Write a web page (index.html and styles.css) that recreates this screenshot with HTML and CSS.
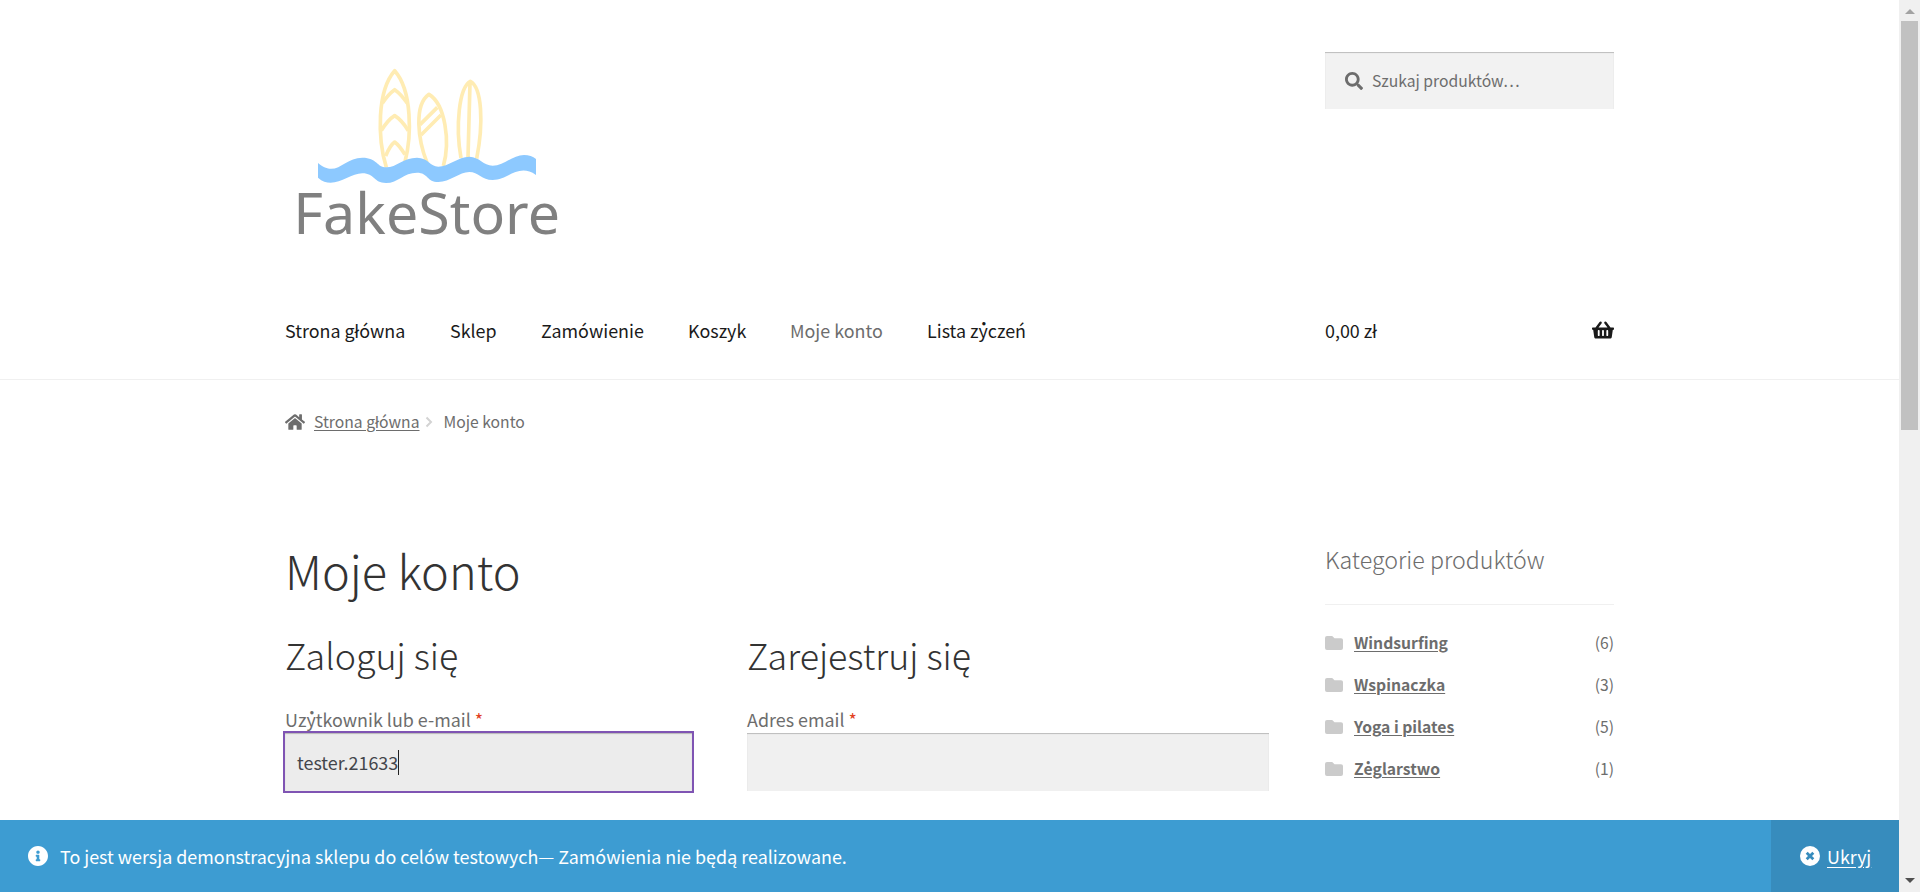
FILE: index.html
```html
<!DOCTYPE html>
<html lang="pl">
<head>
<meta charset="utf-8">
<title>Moje konto – FakeStore</title>
<link rel="stylesheet" href="styles.css">
</head>
<body>
<div class="window">
  <div class="page">
    <header class="header">
      <div class="wrap">
        <div class="branding">
          <svg class="logo" viewBox="0 0 900 600">
            <g fill="none" stroke="#ffecb3" stroke-width="11" stroke-linejoin="round">
              <path d="M319 352C292 265 291 122 344 62C397 122 395 258 375 335"/>
              <path d="M307 160Q325 132 344 119Q363 132 382 160M304 242Q323 210 344 197Q365 210 385 242M317 318Q330 286 344 276Q358 286 375 314"/>
              <path d="M441 338C414 270 401 165 447 133C496 163 511 275 490 348"/>
              <path d="M420 224L472 172M423 255L483 195"/>
              <path d="M543 324C526 230 537 112 571 94C606 112 611 220 590 326M570 98L564 322"/>
            </g>
            <path fill="#8dc9ff" d="M114 339C170 386 190 323 247 323C292 323 290 352 319 352C350 352 370 323 411 323C445 323 450 350 475 350C505 350 535 320 568 320C598 320 610 347 638 347C670 347 700 315 732 315Q754 315 768 327V375C715 338 685 390 638 390C605 390 595 366 568 366C538 366 510 396 475 396C440 396 445 368 411 368C370 368 355 399 318 399C280 399 285 370 247 370C205 370 160 424 114 383Z"/>
            <text class="logo-text" x="40" y="553" textLength="800" lengthAdjust="spacingAndGlyphs">FakeStore</text>
          </svg>
          <div class="search">
            <svg class="search-icon" viewBox="0 0 512 512"><path d="M505 442.7L405.3 343c-4.5-4.5-10.6-7-17-7H372c27.600-35.300 44-79.700 44-128C416 93.100 322.900 0 208 0S0 93.100 0 208s93.100 208 208 208c48.300 0 92.700-16.400 128-44v16.300c0 6.400 2.500 12.500 7 17l99.700 99.700c9.400 9.400 24.600 9.400 33.900 0l28.300-28.300c9.400-9.400 9.400-24.600.1-34zM208 336c-70.700 0-128-57.200-128-128 0-70.700 57.200-128 128-128 70.700 0 128 57.200 128 128 0 70.700-57.200 128-128 128z"/></svg>
            <span>Szukaj produktów…</span>
          </div>
        </div>
        <div class="navbar">
          <nav class="menu">
            <a>Strona główna</a><a>Sklep</a><a>Zamówienie</a><a>Koszyk</a><a class="current">Moje konto</a><a>Lista życzeń</a>
          </nav>
          <div class="cart">
            <span>0,00 zł</span>
            <svg class="basket" viewBox="0 0 576 512"><path d="M576 216v16c0 13.255-10.745 24-24 24h-8l-26.113 182.788C514.509 462.435 494.257 480 470.370 480H105.630c-23.887 0-44.139-17.565-47.518-41.212L32 256h-8c-13.255 0-24-10.745-24-24v-16c0-13.255 10.745-24 24-24h67.341l106.780-146.821c10.395-14.292 30.407-17.453 44.701-7.058 14.293 10.395 17.453 30.408 7.058 44.701L170.477 192h235.046L326.120 82.821c-10.395-14.292-7.234-34.306 7.059-44.701 14.291-10.395 34.306-7.235 44.701 7.058L484.659 192H552c13.255 0 24 10.745 24 24zM312 392V280c0-13.255-10.745-24-24-24s-24 10.745-24 24v112c0 13.255 10.745 24 24 24s24-10.745 24-24zm112 0V280c0-13.255-10.745-24-24-24s-24 10.745-24 24v112c0 13.255 10.745 24 24 24s24-10.745 24-24zm-224 0V280c0-13.255-10.745-24-24-24s-24 10.745-24 24v112c0 13.255 10.745 24 24 24s24-10.745 24-24z"/></svg>
          </div>
        </div>
      </div>
    </header>
    <div class="wrap">
      <div class="breadcrumb">
        <svg class="home" viewBox="0 0 576 512"><path d="M280.370 148.260L96 300.110V464a16 16 0 0 0 16 16l112.060-.29a16 16 0 0 0 15.920-16V368a16 16 0 0 1 16-16h64a16 16 0 0 1 16 16v95.640a16 16 0 0 0 16 16.050L464 480a16 16 0 0 0 16-16V300L295.670 148.260a12.190 12.190 0 0 0-15.300 0zM571.600 251.470L488 182.560V44.050a12 12 0 0 0-12-12h-56a12 12 0 0 0-12 12v72.610L318.470 43a48 48 0 0 0-61 0L4.340 251.470a12 12 0 0 0-1.600 16.900l25.500 31A12 12 0 0 0 45.150 301l235.220-193.740a12.190 12.190 0 0 1 15.300 0L530.900 301a12 12 0 0 0 16.900-1.600l25.500-31a12 12 0 0 0-1.700-16.930z"/></svg>
        <a class="crumb-link">Strona główna</a>
        <svg class="angle" viewBox="0 0 8 12"><path d="M1.500 1.500L6 6L1.500 10.500"/></svg>
        <span>Moje konto</span>
      </div>
      <div class="content">
        <main class="main">
          <h1>Moje konto</h1>
          <div class="forms">
            <section>
              <h2 class="login-title">Zaloguj się</h2>
              <label class="login-label">Użytkownik lub e-mail <b>*</b></label>
              <div class="field focused"><span>tester.21633</span><i class="caret"></i></div>
            </section>
            <section>
              <h2 class="register-title">Zarejestruj się</h2>
              <label>Adres email <b>*</b></label>
              <div class="field"></div>
            </section>
          </div>
        </main>
        <aside class="sidebar">
          <h3>Kategorie produktów</h3>
          <ul>
            <li><svg viewBox="0 0 18 14"><path d="M2 0H7.200L9.500 2.200H16Q18 2.200 18 4V12Q18 14 16 14H2Q0 14 0 12V2Q0 0 2 0Z"/></svg><a>Windsurfing</a><span>(6)</span></li>
            <li><svg viewBox="0 0 18 14"><path d="M2 0H7.200L9.500 2.200H16Q18 2.200 18 4V12Q18 14 16 14H2Q0 14 0 12V2Q0 0 2 0Z"/></svg><a>Wspinaczka</a><span>(3)</span></li>
            <li><svg viewBox="0 0 18 14"><path d="M2 0H7.200L9.500 2.200H16Q18 2.200 18 4V12Q18 14 16 14H2Q0 14 0 12V2Q0 0 2 0Z"/></svg><a>Yoga i pilates</a><span>(5)</span></li>
            <li><svg viewBox="0 0 18 14"><path d="M2 0H7.200L9.500 2.200H16Q18 2.200 18 4V12Q18 14 16 14H2Q0 14 0 12V2Q0 0 2 0Z"/></svg><a>Żeglarstwo</a><span>(1)</span></li>
          </ul>
        </aside>
      </div>
    </div>
    <div class="notice">
      <svg class="notice-icon" viewBox="8 8 496 496"><path d="M256 8C119.043 8 8 119.083 8 256c0 136.997 111.043 248 248 248s248-111.003 248-248C504 119.083 392.957 8 256 8zm0 110c23.196 0 42 18.804 42 42s-18.804 42-42 42-42-18.804-42-42 18.804-42 42-42zm56 254c0 6.627-5.373 12-12 12h-88c-6.627 0-12-5.373-12-12v-24c0-6.627 5.373-12 12-12h12v-64h-12c-6.627 0-12-5.373-12-12v-24c0-6.627 5.373-12 12-12h64c6.627 0 12 5.373 12 12v100h12c6.627 0 12 5.373 12 12v24z"/></svg>
      <p>To jest wersja demonstracyjna sklepu do celów testowych— Zamówienia nie będą realizowane.</p>
      <div class="dismiss">
        <svg class="notice-icon" viewBox="0 0 20 20"><circle cx="10" cy="10" r="10"/><path class="cross" d="M6.700 6.700L13.300 13.300M13.300 6.700L6.700 13.300"/></svg>
        <a>Ukryj</a>
      </div>
    </div>
  </div>
  <div class="scrollbar">
    <svg class="arrow up" viewBox="0 0 10 5"><path d="M0 5L5 0L10 5Z"/></svg>
    <div class="thumb"></div>
    <svg class="arrow down" viewBox="0 0 10 5"><path d="M0 0L5 5L10 0Z"/></svg>
  </div>
</div>
</body>
</html>
```
FILE: styles.css
```css
* { box-sizing: border-box; }
body {
  margin: 0;
  height: 892px;
  overflow: hidden;
  background: #fff;
  color: #6d6d6d;
  font: 400 17.9px/32px "Noto Sans CJK JP", "Noto Sans", sans-serif;
}
h1, h2, h3, p, ul { margin: 0; padding: 0; font-weight: 300; }
.window { display: flex; height: 892px; }
.page { position: relative; width: 1899px; height: 892px; overflow: hidden; }
.wrap { width: 1329px; margin: 0 auto; }

.header { height: 380px; border-bottom: 1px solid #f0f0f0; }
.branding { display: flex; justify-content: space-between; padding-top: 50px; height: 314px; }
.logo { width: 300px; height: 200px; margin-left: -5px; }
.logo-text { font-family: "Noto Sans", sans-serif; font-size: 172px; fill: #808080; }
.search {
  display: flex;
  align-items: center;
  gap: 9px;
  width: 289px;
  height: 57px;
  margin-top: 2px;
  padding-left: 20px;
  background: #f2f2f2;
  box-shadow: inset 0 1px 1px rgba(0, 0, 0, .225);
  font-size: 15.7px;
}
.search-icon { width: 18px; height: 18px; fill: #6d6d6d; }
.navbar { display: flex; justify-content: space-between; color: #1a1a1a; }
.menu { display: grid; grid-template-columns: 165px 91px 147px 102px 137px auto; white-space: nowrap; }
.current { color: #6d6d6d; }
.cart { display: flex; justify-content: space-between; align-items: center; width: 289px; }
.basket { width: 22px; height: 20px; fill: #1a1a1a; }

.breadcrumb { display: flex; align-items: center; height: 84px; font-size: 15.7px; }
.home { width: 20px; height: 18px; margin-right: 9px; fill: #6d6d6d; }
.crumb-link { text-decoration: underline; text-underline-offset: 2px; }
.angle { width: 8px; height: 12px; margin: 0 11px 0 5px; fill: none; stroke: #d3d3d3; stroke-width: 2; }

.content { display: flex; justify-content: space-between; padding-top: 72px; }
.main { width: 984px; }
h1 { height: 74px; font-size: 46.900px; line-height: 68px; color: #333; }
.forms { display: grid; grid-template-columns: 407px 522px; column-gap: 55px; padding-top: 16px; }
h2 { height: 62px; font-size: 35.800px; line-height: 56px; color: #333; white-space: nowrap; }
label { display: block; height: 44px; padding-top: 17px; line-height: 28px; height: 45px; }
label b { font-weight: 400; color: #e2401c; }
.field {
  display: flex;
  align-items: center;
  height: 58px;
  padding-left: 12px;
  background: #f0f0f0;
  box-shadow: inset 0 1px 1px rgba(0, 0, 0, .225);
  color: #43454b;
}
.focused { background: #ececec; outline: 2px solid #7f54b3; }
.caret { width: 1px; height: 25px; background: #222; }

.sidebar { width: 289px; padding-top: 3px; }
h3 { height: 66px; border-bottom: 1px solid #f0f0f0; font-size: 23.200px; line-height: 40px; white-space: nowrap; }
ul { padding-top: 17px; list-style: none; font-size: 15.700px; font-weight: 400; }
li { display: flex; align-items: center; height: 42px; }
li svg { width: 18px; height: 14px; margin-right: 11px; fill: #cbcbcb; }
li a { flex: 1; font-weight: 600; text-decoration: underline; text-underline-offset: 2px; }

.notice {
  position: absolute;
  left: 0;
  right: 0;
  bottom: 0;
  display: flex;
  align-items: center;
  height: 72px;
  padding-left: 28px;
  background: #3d9cd2;
  color: #fff;
}
.notice p { flex: 1; font-weight: 400; }
.notice-icon { width: 20px; height: 20px; margin-right: 12px; fill: #fff; }
.dismiss { display: flex; align-items: center; width: 128px; height: 72px; padding-left: 29px; background: #378cbd; }
.dismiss .notice-icon { margin-right: 7px; }
.dismiss a { text-decoration: underline; text-underline-offset: 3px; }
.cross { stroke: #378cbd; stroke-width: 2.800; }

.scrollbar { display: flex; flex-direction: column; align-items: center; width: 21px; background: #f0f0f0; }
.arrow { width: 10px; height: 5px; }
.up { margin: 9px 0 7px; fill: #a3a3a3; }
.down { margin: auto 0 9px; fill: #505050; }
.thumb { width: 17px; height: 409px; background: #c1c1c1; }
```
